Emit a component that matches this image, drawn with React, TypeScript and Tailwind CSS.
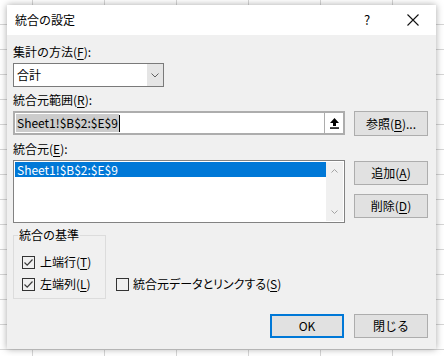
import React from "react";

const font = { fontFamily: '"Noto Sans CJK JP", "Noto Sans", sans-serif' };

function U({ c }: { c: string }) {
  return <span className="underline underline-offset-2">{c}</span>;
}

function CheckBox({ checked }: { checked: boolean }) {
  return (
    <span className="flex h-[13px] w-[13px] shrink-0 items-center justify-center border border-[#333333] bg-[#f0f0f0]">
      {checked && (
        <svg width="11" height="11" viewBox="0 0 11 11">
          <path d="M1.5 5.5 L4.2 8.2 L9.5 2.5" fill="none" stroke="#3c3c3c" strokeWidth="1.2" />
        </svg>
      )}
    </span>
  );
}

function Btn({ children, ok }: { children: React.ReactNode; ok?: boolean }) {
  return (
    <div
      className={
        "flex h-[24px] w-[74px] items-center justify-center bg-[#e1e1e1] text-[12px] leading-4 text-black " +
        (ok ? "border-2 border-[#0078d7]" : "border border-[#adadad]")
      }
    >
      {children}
    </div>
  );
}

export default function App() {
  return (
    <div
      className="relative h-[356px] w-[444px] overflow-hidden bg-white bg-[linear-gradient(to_right,#d6d6d6_1px,transparent_1px),linear-gradient(to_bottom,#d6d6d6_1px,transparent_1px)] bg-size-[72px_25px] bg-position-[32px_24px]"
      style={font}
    >
      <div className="absolute left-[7px] top-[5px] flex h-[344px] w-[429px] flex-col bg-[#f0f0f0] shadow-[0_0_7px_rgba(0,0,0,0.35)]">
        {/* Title bar */}
        <div className="flex h-[30px] shrink-0 items-center bg-white">
          <div className="flex-1 pl-[8px] text-[12px] leading-4 text-black">統合の設定</div>
          <div className="flex h-[30px] w-[46px] items-center justify-center text-[13px] text-black">?</div>
          <div className="flex h-[30px] w-[46px] items-center justify-center">
            <svg width="12" height="12" viewBox="0 0 12 12">
              <path d="M0.5 0.5 L11.5 11.5 M11.5 0.5 L0.5 11.5" stroke="#111" strokeWidth="1.1" />
            </svg>
          </div>
        </div>

        {/* Body */}
        <div className="flex flex-col pl-[6px] pr-[8px] text-[12px] leading-4 text-black">
          <div className="mt-[9px] h-4">
            集計の方法(<U c="F" />):
          </div>
          <div className="mt-[3px] flex h-[24px] w-[151px] border border-[#7a7a7a] bg-white">
            <div className="flex flex-1 items-center pl-[3px]">合計</div>
            <div className="flex w-[16px] items-center justify-center bg-[#e5e5e5]">
              <svg width="8" height="5" viewBox="0 0 8 5">
                <path d="M0.5 0.5 L4 4 L7.5 0.5" fill="none" stroke="#606060" strokeWidth="1" />
              </svg>
            </div>
          </div>

          <div className="mt-[5px] h-4">
            統合元範囲(<U c="R" />):
          </div>
          <div className="mt-[3px] flex h-[25px] items-start gap-[9px]">
            <div className="flex h-[24px] w-[332px] border-2 border-[#adadad] bg-white">
              <div className="flex flex-1 items-center pl-[1px]">
                <span className="bg-[#cccccc] px-[1px] leading-[18px]">Sheet1!$B$2:$E$9</span>
                <span className="h-[17px] w-px bg-black" />
              </div>
              <div className="flex w-[19px] items-center justify-center border-l border-[#adadad] bg-white">
                <svg width="9" height="11" viewBox="0 0 9 11">
                  <polygon points="4.5,0 9,5 6,5 6,8 3,8 3,5 0,5" fill="#000" />
                  <rect x="0" y="9.3" width="9" height="1.5" fill="#000" />
                </svg>
              </div>
            </div>
            <div className="flex h-[25px] w-[74px] items-center justify-center border border-[#adadad] bg-[#e1e1e1]">
              参照(<U c="B" />)...
            </div>
          </div>

          <div className="mt-[5px] h-4">
            統合元(<U c="E" />):
          </div>
          <div className="mt-[3px] flex gap-[9px]">
            <div className="flex h-[63px] w-[332px] border border-[#828282] bg-white p-px">
              <div className="flex-1">
                <div className="flex h-[15px] items-center bg-[#0078d7] pl-[2px] text-white">Sheet1!$B$2:$E$9</div>
              </div>
              <div className="flex w-[17px] flex-col items-center justify-between bg-[#f0f0f0] py-[7px]">
                <svg width="7" height="4" viewBox="0 0 7 4">
                  <path d="M0.5 3.5 L3.5 0.5 L6.5 3.5" fill="none" stroke="#a3a3a3" strokeWidth="1" />
                </svg>
                <svg width="7" height="4" viewBox="0 0 7 4">
                  <path d="M0.5 0.5 L3.5 3.5 L6.5 0.5" fill="none" stroke="#a3a3a3" strokeWidth="1" />
                </svg>
              </div>
            </div>
            <div className="mt-px flex flex-col gap-[9px]">
              <Btn>
                追加(<U c="A" />)
              </Btn>
              <Btn>
                削除(<U c="D" />)
              </Btn>
            </div>
          </div>

          <div className="mt-[12px] flex items-end">
            <div className="relative flex h-[64px] w-[93px] flex-col gap-[6px] border border-[#dcdcdc] pl-[8px] pt-[18px]">
              <span className="absolute -top-[9px] left-[4px] bg-[#f0f0f0] px-[1px]">統合の基準</span>
              <label className="flex items-center gap-[5px]">
                <CheckBox checked />
                <span>
                  上端行(<U c="T" />)
                </span>
              </label>
              <label className="flex items-center gap-[5px]">
                <CheckBox checked />
                <span>
                  左端列(<U c="L" />)
                </span>
              </label>
            </div>
            <label className="mb-[7px] ml-[10px] flex items-center gap-[4px]">
              <CheckBox checked={false} />
              <span>
                統合元<span className="[font-feature-settings:'palt']">データとリンクする</span>(<U c="S" />)
              </span>
            </label>
          </div>

          <div className="mt-[15px] flex justify-end gap-[10px]">
            <Btn ok>OK</Btn>
            <Btn>閉じる</Btn>
          </div>
        </div>
      </div>
    </div>
  );
}
